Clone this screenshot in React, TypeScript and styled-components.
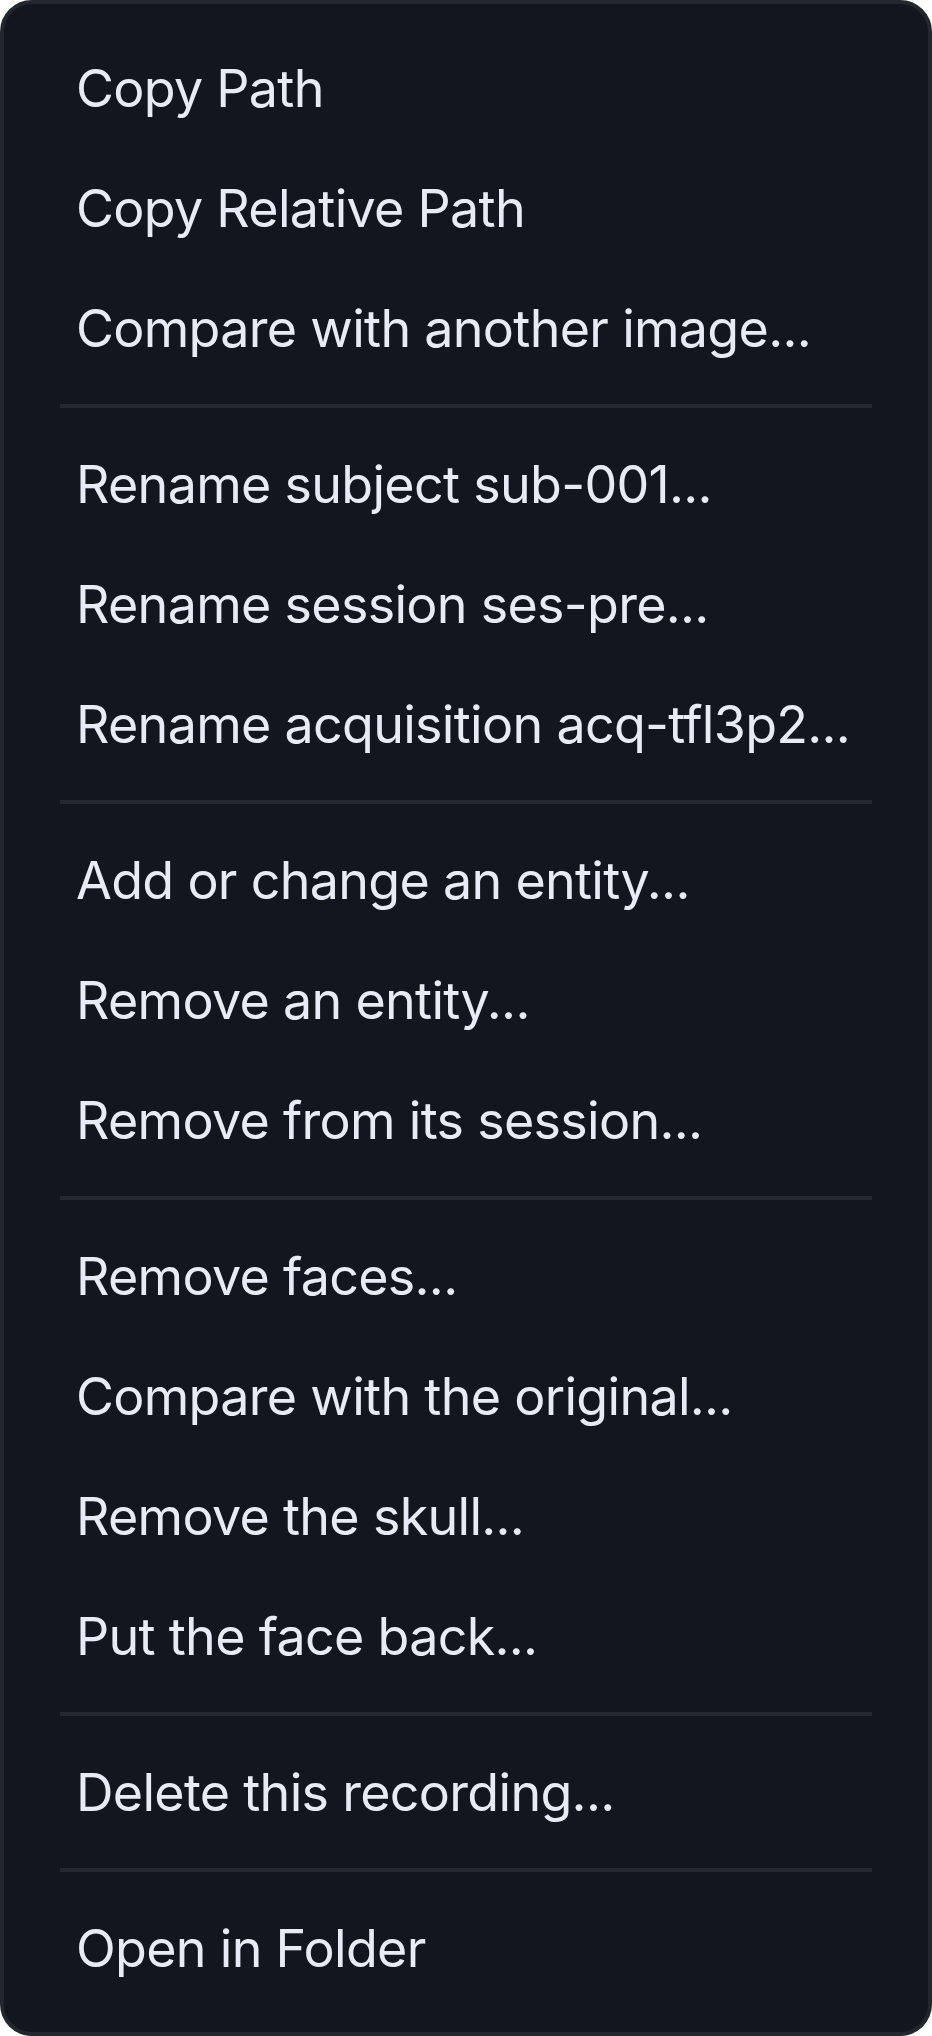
import styled, { createGlobalStyle } from "styled-components";

const GlobalStyle = createGlobalStyle`
  html, body {
    margin: 0;
    padding: 0;
    background: #ffffff;
  }
  * {
    box-sizing: border-box;
  }
`;

const Menu = styled.div`
  width: 932px;
  height: 2036px;
  background: #12161e;
  border: 4px solid #22272e;
  border-radius: 32px;
  padding: 24px 0;
  display: flex;
  flex-direction: column;
  font-family: Inter, "Noto Sans", sans-serif;
`;

const Item = styled.div`
  height: 120px;
  display: flex;
  align-items: center;
  padding: 0 72px;
  font-size: 52px;
  letter-spacing: -0.7px;
  color: #e6ebf5;
  white-space: nowrap;
  cursor: default;
`;

const Divider = styled.div`
  height: 4px;
  margin: 16px 56px;
  background: #232831;
`;

const groups: string[][] = [
  ["Copy Path", "Copy Relative Path", "Compare with another image..."],
  [
    "Rename subject sub-001...",
    "Rename session ses-pre...",
    "Rename acquisition acq-tfl3p2...",
  ],
  ["Add or change an entity...", "Remove an entity...", "Remove from its session..."],
  [
    "Remove faces...",
    "Compare with the original...",
    "Remove the skull...",
    "Put the face back...",
  ],
  ["Delete this recording..."],
  ["Open in Folder"],
];

export default function App() {
  return (
    <>
      <GlobalStyle />
      <Menu>
        {groups.map((group, i) => (
          <div key={i}>
            {i > 0 && <Divider />}
            {group.map((label) => (
              <Item key={label}>{label}</Item>
            ))}
          </div>
        ))}
      </Menu>
    </>
  );
}
